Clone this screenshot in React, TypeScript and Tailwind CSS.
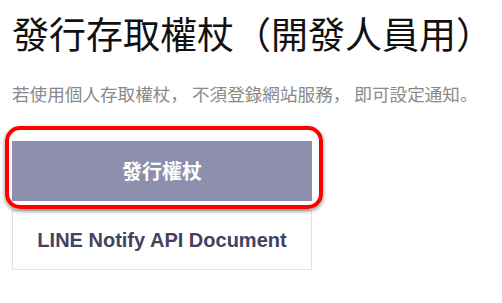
import React from "react";

export default function App() {
  const cjk = { fontFamily: '"Noto Sans CJK TC", "Noto Sans CJK JP", sans-serif' };
  return (
    <div className="w-[502px] h-[303px] bg-white overflow-hidden pl-[12px]">
      <h1
        className="pt-[15px] text-[37px] leading-[37px] text-[#111] whitespace-nowrap"
        style={cjk}
      >
        發行存取權杖（開發人員用）
      </h1>
      <p
        className="mt-[33px] text-[17.6px] leading-[18px] text-[#8a8a8a] whitespace-nowrap"
        style={{ fontFamily: '"Noto Sans CJK JP", sans-serif' }}
      >
        若使用個人存取權杖<span className="mr-[4px]">，</span>不須登錄網站服務<span className="mr-[4px]">，</span>即可設定通知。
      </p>
      <div className="mt-[38px] w-[300px] flex flex-col gap-[9px]">
        <div className="relative">
          <button
            className="w-full h-[60px] bg-[#8e8fac] text-white text-[20px] font-bold flex items-center justify-center"
            style={cjk}
          >
            發行權杖
          </button>
          <div className="absolute left-[-7px] top-[-15px] right-[-11px] bottom-[-8px] border-[4.5px] border-[#ff0000] rounded-[15px] shadow-[0_2px_4px_rgba(0,0,0,0.45)] pointer-events-none" />
        </div>
        <button
          className="w-full h-[60px] bg-white border border-[#e3e3e3] text-[#41435f] text-[20px] font-bold flex items-center justify-center"
          style={{ fontFamily: '"Liberation Sans", Arial, sans-serif' }}
        >
          LINE Notify API Document
        </button>
      </div>
    </div>
  );
}
